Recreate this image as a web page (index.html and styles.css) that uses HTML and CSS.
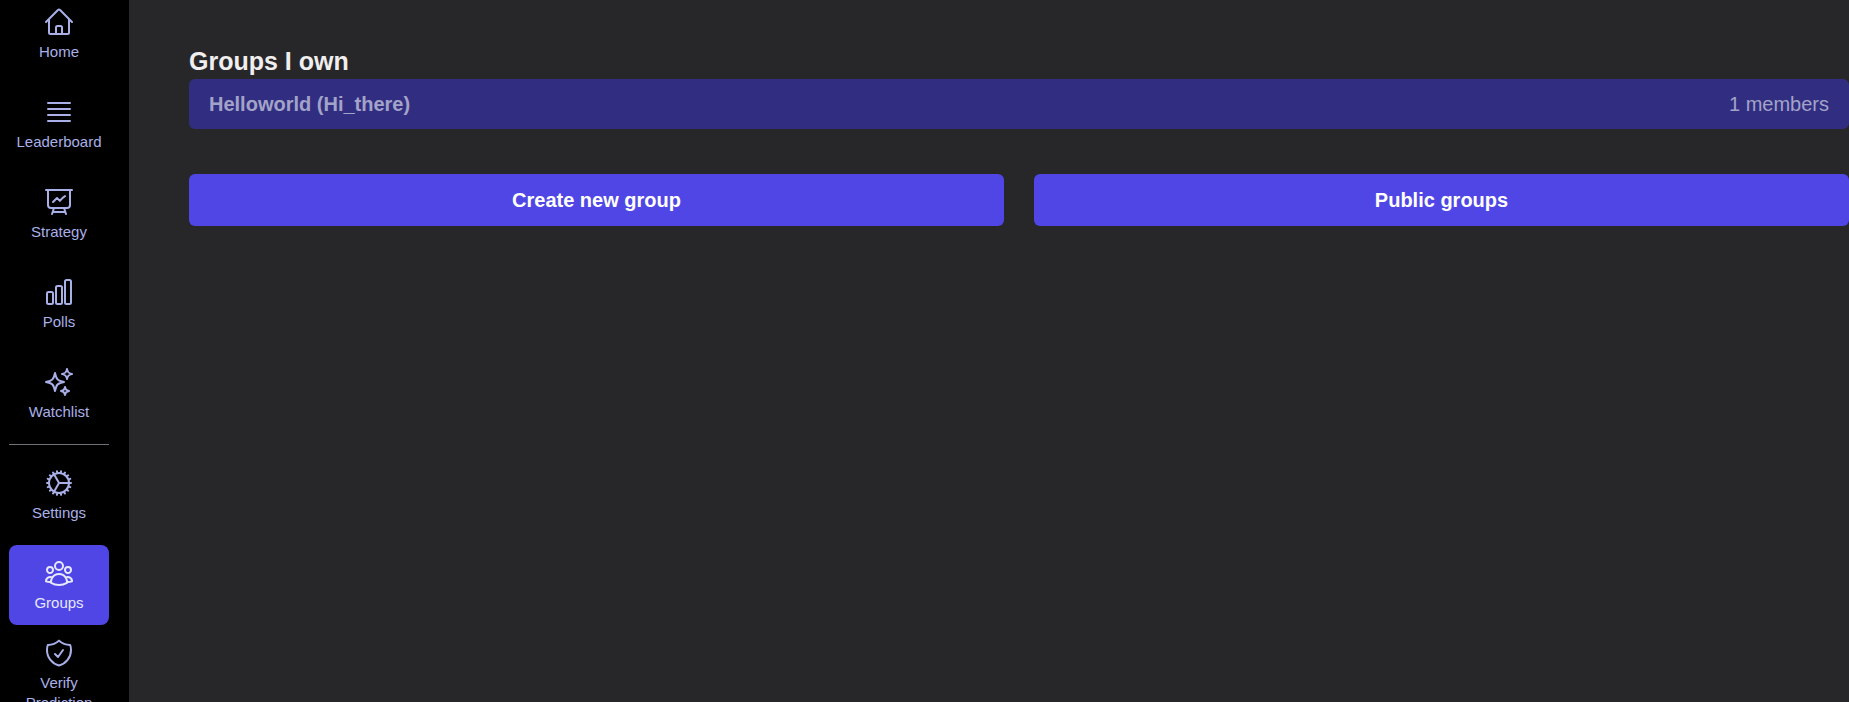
FILE: index.html
```html
<!DOCTYPE html>
<html lang="en">
<head>
<meta charset="utf-8">
<title>Groups</title>
<link rel="stylesheet" href="styles.css">
</head>
<body>
<div class="app">
  <nav class="sidebar">
    <a class="nav-item">
      <svg class="nav-icon" viewBox="0 0 24 24"><path d="m2.25 12 8.954-8.955c.44-.439 1.152-.439 1.591 0L21.75 12M4.5 9.75v10.125c0 .621.504 1.125 1.125 1.125H9.75v-4.875c0-.621.504-1.125 1.125-1.125h2.25c.621 0 1.125.504 1.125 1.125V21h4.125c.621 0 1.125-.504 1.125-1.125V9.75M8.25 21h8.25"/></svg>
      <span class="nav-label">Home</span>
    </a>
    <a class="nav-item">
      <svg class="nav-icon" viewBox="0 0 24 24"><path d="M3.75 5.25h16.5m-16.5 4.5h16.5m-16.5 4.5h16.5m-16.5 4.5h16.5"/></svg>
      <span class="nav-label">Leaderboard</span>
    </a>
    <a class="nav-item">
      <svg class="nav-icon" viewBox="0 0 24 24"><path d="M3.75 3v11.25A2.25 2.25 0 0 0 6 16.5h2.25M3.75 3h-1.5m1.5 0h16.5m0 0h1.5m-1.5 0v11.25A2.25 2.25 0 0 1 18 16.5h-2.25m-7.5 0h7.5m-7.5 0-1 3m8.5-3 1 3m0 0 .5 1.5m-.5-1.5h-9.5m0 0-.5 1.5m.75-9 3-3 2.148 2.148A12.061 12.061 0 0 1 16.5 7.605"/></svg>
      <span class="nav-label">Strategy</span>
    </a>
    <a class="nav-item">
      <svg class="nav-icon" viewBox="0 0 24 24"><path d="M3 13.125C3 12.504 3.504 12 4.125 12h2.25c.621 0 1.125.504 1.125 1.125v6.75C7.5 20.496 6.996 21 6.375 21h-2.25A1.125 1.125 0 0 1 3 19.875v-6.75ZM9.75 8.625c0-.621.504-1.125 1.125-1.125h2.25c.621 0 1.125.504 1.125 1.125v11.25c0 .621-.504 1.125-1.125 1.125h-2.25a1.125 1.125 0 0 1-1.125-1.125V8.625ZM16.5 4.125c0-.621.504-1.125 1.125-1.125h2.25C20.496 3 21 3.504 21 4.125v15.75c0 .621-.504 1.125-1.125 1.125h-2.25a1.125 1.125 0 0 1-1.125-1.125V4.125Z"/></svg>
      <span class="nav-label">Polls</span>
    </a>
    <a class="nav-item">
      <svg class="nav-icon" viewBox="0 0 24 24"><path d="M9.813 15.904 9 18.75l-.813-2.846a4.5 4.5 0 0 0-3.09-3.09L2.25 12l2.846-.813a4.5 4.5 0 0 0 3.09-3.09L9 5.25l.813 2.846a4.5 4.5 0 0 0 3.09 3.09L15.75 12l-2.846.813a4.5 4.5 0 0 0-3.09 3.09ZM18.259 8.715 18 9.75l-.259-1.035a3.375 3.375 0 0 0-2.455-2.456L14.25 6l1.036-.259a3.375 3.375 0 0 0 2.455-2.456L18 2.25l.259 1.035a3.375 3.375 0 0 0 2.456 2.456L21.75 6l-1.035.259a3.375 3.375 0 0 0-2.456 2.456ZM16.894 20.567 16.5 21.75l-.394-1.183a2.25 2.25 0 0 0-1.423-1.423L13.5 18.75l1.183-.394a2.25 2.25 0 0 0 1.423-1.423l.394-1.183.394 1.183a2.25 2.25 0 0 0 1.423 1.423l1.183.394-1.183.394a2.25 2.25 0 0 0-1.423 1.423Z"/></svg>
      <span class="nav-label">Watchlist</span>
    </a>
    <hr class="nav-divider">
    <a class="nav-item">
      <svg class="nav-icon" viewBox="0 0 24 24"><path d="M4.5 12a7.5 7.5 0 0 0 15 0m-15 0a7.5 7.5 0 0 1 15 0m-15 0H3m16.5 0H21m-1.5 0H12m-8.457 3.077 1.41-.513m14.095-5.13 1.41-.513M5.106 17.785l1.15-.964m11.49-9.642 1.149-.964M7.501 19.795l.75-1.3m7.5-12.99.75-1.3m-6.063 16.658.26-1.477m2.605-14.772.26-1.477m0 17.726-.26-1.477M10.698 4.614l-.26-1.477M16.5 19.794l-.75-1.299M7.5 4.205 12 12m6.894 5.785-1.149-.964M6.256 7.178l-1.15-.964m15.352 8.864-1.41-.513M4.954 9.435l-1.41-.514M12.002 12l-3.75 6.495"/></svg>
      <span class="nav-label">Settings</span>
    </a>
    <a class="nav-item nav-item-active">
      <svg class="nav-icon" viewBox="0 0 24 24"><path d="M18 18.72a9.094 9.094 0 0 0 3.741-.479 3 3 0 0 0-4.682-2.72m.94 3.198.001.031c0 .225-.012.447-.037.666A11.944 11.944 0 0 1 12 21c-2.17 0-4.207-.576-5.963-1.584A6.062 6.062 0 0 1 6 18.719m12 0a5.971 5.971 0 0 0-.941-3.197m0 0A5.995 5.995 0 0 0 12 12.75a5.995 5.995 0 0 0-5.058 2.772m0 0a3 3 0 0 0-4.681 2.72 8.986 8.986 0 0 0 3.74.477m.94-3.197a5.971 5.971 0 0 0-.94 3.197M15 6.75a3 3 0 1 1-6 0 3 3 0 0 1 6 0Zm6 3a2.25 2.25 0 1 1-4.5 0 2.25 2.25 0 0 1 4.5 0Zm-13.5 0a2.25 2.25 0 1 1-4.5 0 2.25 2.25 0 0 1 4.5 0Z"/></svg>
      <span class="nav-label">Groups</span>
    </a>
    <a class="nav-item">
      <svg class="nav-icon" viewBox="0 0 24 24"><path d="M9 12.75 11.25 15 15 9.75m-3-7.036A11.959 11.959 0 0 1 3.598 6 11.99 11.99 0 0 0 3 9.749c0 5.592 3.824 10.29 9 11.623 5.176-1.332 9-6.03 9-11.622 0-1.31-.21-2.571-.598-3.751h-.152c-3.196 0-6.1-1.248-8.25-3.285Z"/></svg>
      <span class="nav-label">Verify Prediction</span>
    </a>
  </nav>
  <main class="content">
    <h2 class="section-title">Groups I own</h2>
    <div class="group-row">
      <span class="group-name">Helloworld (Hi_there)</span>
      <span class="group-members">1 members</span>
    </div>
    <div class="actions">
      <button class="action-btn">Create new group</button>
      <button class="action-btn">Public groups</button>
    </div>
  </main>
</div>
</body>
</html>
```
FILE: styles.css
```css
* { box-sizing: border-box; }
html, body { margin: 0; height: 100%; overflow: hidden; }
body { font-family: "Liberation Sans", Arial, sans-serif; background: #27272a; }
.app { display: flex; height: 702px; }
.sidebar {
  width: 129px;
  flex: none;
  background: #000;
  padding: 0 20px 0 9px;
  overflow: hidden;
  display: flex;
  flex-direction: column;
  gap: 10px;
}
.nav-item {
  flex: none;
  width: 100px;
  min-height: 80px;
  border-radius: 8px;
  display: flex;
  flex-direction: column;
  align-items: center;
  justify-content: center;
  color: #a9b0e8;
}
.nav-item:first-child { margin-top: -6px; }
.nav-item-active { background: #4f46e5; color: #e6e8ff; }
.nav-icon {
  width: 32px;
  height: 32px;
  margin-bottom: 4px;
  fill: none;
  stroke: currentColor;
  stroke-width: 1.5;
  stroke-linecap: round;
  stroke-linejoin: round;
}
.nav-label { font-size: 15px; line-height: 20px; text-align: center; }
.nav-divider { width: 100px; height: 1px; margin: 0; border: 0; background: #71717a; flex: none; }
.content { flex: 1; min-width: 0; padding: 45px 0 0 60px; }
.section-title { margin: 0 0 2px; font-size: 25px; line-height: 32px; font-weight: 700; color: #f0eeee; }
.group-row {
  height: 50px;
  padding: 0 20px;
  border-radius: 6px;
  background: #312e81;
  display: flex;
  align-items: center;
  justify-content: space-between;
  font-size: 20px;
  color: #a3a3c9;
}
.group-name { font-weight: 700; }
.actions { display: flex; gap: 30px; margin-top: 45px; }
.action-btn {
  flex: 1;
  height: 52px;
  border: 0;
  border-radius: 6px;
  background: #4f46e5;
  color: #fff;
  font: 700 20px "Liberation Sans", Arial, sans-serif;
}
```
